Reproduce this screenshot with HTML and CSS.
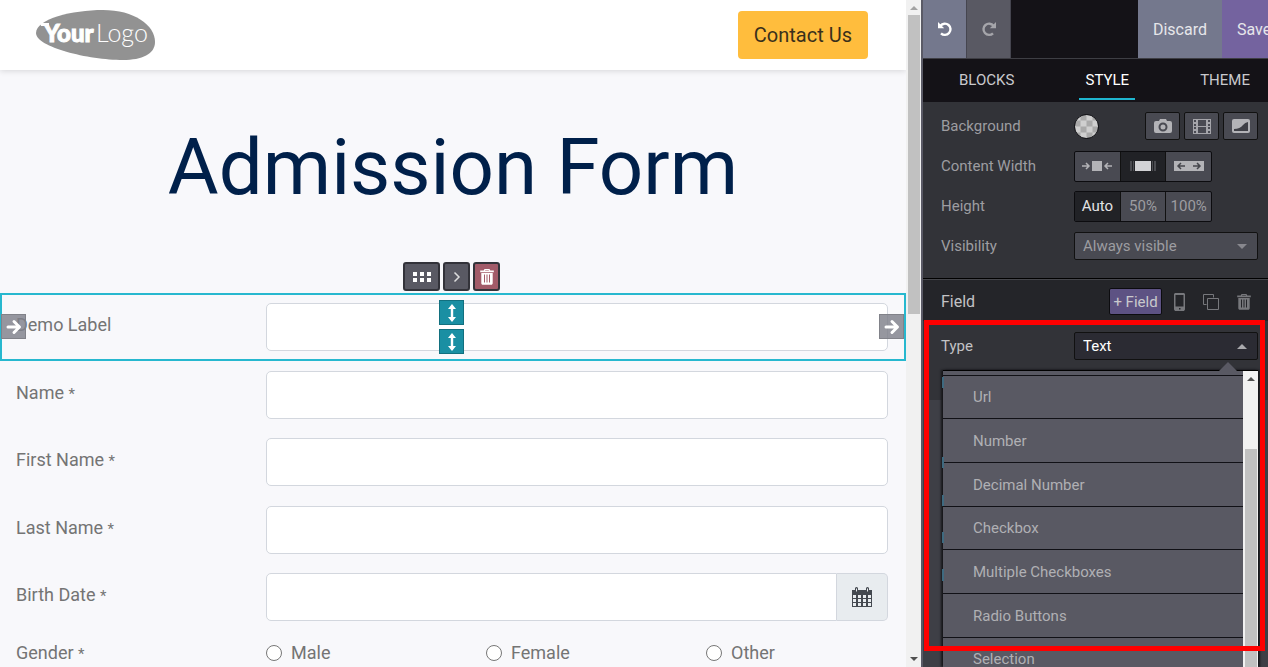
FILE: index.html
```html
<!DOCTYPE html>
<html lang="en">
<head>
<meta charset="utf-8">
<title>Admission Form</title>
<link rel="stylesheet" href="styles.css">
</head>
<body>
<svg class="defs" aria-hidden="true">
  <symbol id="trash" viewBox="0 0 14 16"><path fill="currentColor" fill-rule="evenodd" d="M3.700 1.500 4.500 .1h5l.8 1.400H13.800v1.700H.2V1.500zM5 1.500h4l-.3-.5H5.300zM1.300 4h11.400v10.300c0 .9-.6 1.500-1.500 1.500H2.800c-.9 0-1.500-.6-1.500-1.500zM4 5.500v8h1v-8zm2.500 0v8h1v-8zm2.500 0v8h1v-8z"/></symbol>
  <symbol id="updown" viewBox="0 0 10 20"><path fill="#fff" d="M5 1 9 6H6.200v8H9l-4 5-4-5h2.800V6H1z"/></symbol>
  <symbol id="right" viewBox="0 0 16 16"><path fill="none" stroke="#fff" stroke-width="3" stroke-linecap="round" stroke-linejoin="round" d="M2 8h11M8 2.500 13.500 8 8 13.500"/></symbol>
  <symbol id="undo" viewBox="0 0 16 16"><path fill="none" stroke="currentColor" stroke-width="2.400" d="M3.500 4.800A5.600 5.600 0 1 1 4 12.300"/><path fill="currentColor" d="M1 1v6.200h6.200z"/></symbol>
</svg>
<div class="app">
  <div class="site">
    <header class="top">
      <a href="#" class="logo" aria-label="Your Logo">
        <svg width="120" height="52" viewBox="0 0 120 52">
          <path fill="#929292" d="M0 24C0 10 36 1 67 1c31 0 52 15 52 32 0 12-13 18-32 18C52 51 0 38 0 24z"/>
          <path fill="#fff" d="M4 14h9v3H5z"/>
          <text class="logo-bold" x="8" y="33">Your</text>
          <text class="logo-light" x="60" y="33">Logo</text>
        </svg>
      </a>
      <button class="contact">Contact Us</button>
    </header>
    <main>
      <h1>Admission Form</h1>
      <form class="form">
        <div class="row selected">
          <label for="demo">Demo Label</label><input id="demo" type="text">
          <div class="tools">
            <button type="button" class="tool drag" aria-label="Move"><svg width="18" height="12"><path fill="#fff" d="M0 1h4v4H0zM7 1h4v4H7zM14 1h4v4h-4zM0 7h4v4H0zM7 7h4v4H7zM14 7h4v4h-4z"/></svg></button>
            <button type="button" class="tool" aria-label="Next"><svg width="8" height="12"><path fill="none" stroke="#ddd" stroke-width="1.500" d="m1.500 1.500 4.500 4.500-4.500 4.500"/></svg></button>
            <button type="button" class="tool remove" aria-label="Delete"><svg width="14" height="16"><use href="#trash"/></svg></button>
          </div>
          <div class="handles">
            <span class="handle"><svg width="10" height="20"><use href="#updown"/></svg></span>
            <span class="handle"><svg width="10" height="20"><use href="#updown"/></svg></span>
          </div>
          <span class="handle side start"><svg width="16" height="16"><use href="#right"/></svg></span>
          <span class="handle side end"><svg width="16" height="16"><use href="#right"/></svg></span>
        </div>
        <div class="row"><label for="name">Name <small>*</small></label><input id="name" type="text"></div>
        <div class="row"><label for="first">First Name <small>*</small></label><input id="first" type="text"></div>
        <div class="row"><label for="last">Last Name <small>*</small></label><input id="last" type="text"></div>
        <div class="row"><label for="birth">Birth Date <small>*</small></label>
          <div class="group"><input id="birth" type="text"><button type="button" class="cal" aria-label="Pick a date"><svg width="20" height="20"><path fill="#444950" fill-rule="evenodd" d="M0 3h3V1q1.500-2 3 0v2h8V1q1.500-2 3 0v2h3v17H0zM1 8v3h3V8zm5 0v3h3V8zm5 0v3h3V8zm5 0v3h3V8zM1 12v3h3v-3zm5 0v3h3v-3zm5 0v3h3v-3zm5 0v3h3v-3zM1 16v3h3v-3zm5 0v3h3v-3zm5 0v3h3v-3zm5 0v3h3v-3zM4 1.500v3h1v-3zm11 0v3h1v-3z"/></svg></button></div>
        </div>
        <div class="row gender"><span class="lab">Gender <small>*</small></span>
          <div class="radios">
            <label><input type="radio" name="gender">Male</label>
            <label><input type="radio" name="gender">Female</label>
            <label><input type="radio" name="gender">Other</label>
          </div>
        </div>
      </form>
    </main>
  </div>
  <div class="scroll"><i class="up dim"></i><div class="thumb page-thumb"></div><i class="down"></i></div>
  <aside class="panel">
    <div class="bar">
      <button class="undo" aria-label="Undo"><svg width="16" height="16"><use href="#undo"/></svg></button>
      <button class="redo" aria-label="Redo"><svg width="16" height="16"><use href="#undo"/></svg></button>
      <button class="discard">Discard</button>
      <button class="save">Save</button>
    </div>
    <nav class="tabs"><button>BLOCKS</button><button class="on">STYLE</button><button>THEME</button></nav>
    <section class="options">
      <div class="opt"><span>Background</span>
        <div class="bg"><button class="swatch" aria-label="Color"></button>
          <button class="box" aria-label="Image"><svg width="18" height="14"><path fill="#b3b3b7" fill-rule="evenodd" d="M6 0h6l1 2h3q2 0 2 2v8q0 2-2 2H2q-2 0-2-2V4q0-2 2-2h3zm3 3.500a4.500 4.500 0 1 0 0 9 4.500 4.500 0 0 0 0-9zM9 5.500a2.500 2.500 0 1 1 0 5 2.500 2.500 0 0 1 0-5z"/></svg></button>
          <button class="box" aria-label="Video"><svg width="18" height="15"><path fill="#a5a5aa" fill-rule="evenodd" d="M0 0h18v15H0zM1 1v2h2V1zm0 4v2h2V5zm0 3v2h2V8zm0 4v2h2v-2zM5 1v6h8V1zm0 7v6h8V8zM15 1v2h2V1zm0 4v2h2V5zm0 3v2h2V8zm0 4v2h2v-2z"/></svg></button>
          <button class="box" aria-label="Shape"><svg width="18" height="14"><rect width="18" height="14" rx="2" fill="#b3b3b7"/><path fill="#3e3f46" d="M2 12V10Q8 10 11 6q2-2.500 5-3v9z"/></svg></button>
        </div>
      </div>
      <div class="opt"><span>Content Width</span>
        <div class="seg">
          <button aria-label="Small"><svg width="30" height="12"><path fill="#b3b3b7" d="M10 1h10v10H10z"/><path fill="none" stroke="#b3b3b7" stroke-width="1.500" d="M0 6h7M4 3l3 3-3 3M30 6h-7M26 3l-3 3 3 3"/></svg></button>
          <button class="on" aria-label="Regular"><svg width="26" height="12"><path fill="#d2d2d5" d="M5 1h16v10H5z"/><path fill="#4a4b50" d="M0 1h2v10H0zM3 1h1v10H3zM22 1h1v10h-1zM24 1h2v10h-2z"/></svg></button>
          <button aria-label="Full"><svg width="30" height="12"><path fill="#b3b3b7" d="M0 1h30v10H0z"/><path fill="none" stroke="#45464c" stroke-width="1.500" d="M4 6h7M7 3 4 6l3 3M26 6h-7M23 3l3 3-3 3"/></svg></button>
        </div>
      </div>
      <div class="opt"><span>Height</span><div class="seg"><button class="on">Auto</button><button>50%</button><button>100%</button></div></div>
      <div class="opt"><label for="vis">Visibility</label><div class="select"><select id="vis"><option>Always visible</option></select><i class="down"></i></div></div>
    </section>
    <div class="head"><h2>Field</h2>
      <button class="add">+ Field</button>
      <button class="icon" aria-label="Mobile"><svg width="11" height="18"><path fill="currentColor" fill-rule="evenodd" d="M1 0h9l1 1v15.500L10 18H1l-1-1.500V1zm.5 2v11.500h8V2zM5 15v1.500h1.500V15z"/></svg></button>
      <button class="icon" aria-label="Duplicate"><svg width="16" height="16"><path fill="none" stroke="currentColor" d="M3.500 10.500h-3v-10h10v3M4.500 4.500h11v11h-11z"/></svg></button>
      <button class="icon" aria-label="Remove"><svg width="14" height="16"><use href="#trash"/></svg></button>
    </div>
    <section class="fields">
      <div class="opt bright"><label for="type">Type</label><div class="select open"><select id="type"><option>Text</option></select><i class="up"></i></div></div>
      <div class="menu" role="listbox">
        <div class="items">
          <button role="option">Url</button><button role="option">Number</button><button role="option">Decimal Number</button><button role="option">Checkbox</button><button role="option">Multiple Checkboxes</button><button role="option">Radio Buttons</button><button role="option">Selection</button>
        </div>
        <div class="scroll"><i class="up"></i><div class="thumb menu-thumb"></div></div>
      </div>
    </section>
    <div class="frame"></div>
  </aside>
</div>
</body>
</html>
```

FILE: styles.css
```css
* { box-sizing: border-box; }
body { margin: 0; font-family: Roboto, "Liberation Sans", sans-serif; overflow: hidden; }
button, input, select { font: inherit; color: inherit; margin: 0; padding: 0; border: 0; background: none; }
button { display: flex; align-items: center; justify-content: center; flex: none; }
svg { display: block; flex: none; }
.defs { position: absolute; width: 0; height: 0; }
.app { display: flex; height: 100vh; overflow: hidden; }

/* website preview */
.site { flex: 1; min-width: 0; background: #f8f8fb; color: #747474; font-size: 18px; overflow: hidden; }
.top { display: flex; align-items: center; justify-content: space-between; height: 70px; padding: 0 38px 0 36px; background: #fff; box-shadow: 0 1px 6px rgba(0, 0, 0, .14); }
.logo-bold, .logo-light { fill: #fff; font-family: Lato, sans-serif; font-size: 25px; }
.logo-bold { font-size: 24px; font-weight: 900; stroke: #fff; stroke-width: 1px; }
.logo-light { font-weight: 300; }
.contact { height: 48px; padding: 0 16px; border-radius: 4px; background: #ffbd3d; color: #3a301b; font-size: 20px; }
h1 { margin: 51px 0 78px; color: #00204a; font-size: 78px; line-height: 94px; font-weight: 400; text-align: center; }
.row { position: relative; display: grid; grid-template-columns: 250px 1fr; height: 68px; padding: 10px 18px 10px 16px; }
.row:nth-child(even) { height: 67px; }
.row > label, .lab { padding-top: 10px; line-height: 24px; }
.row small { font-size: 15px; }
.row input[type="text"] { width: 100%; min-width: 0; height: 48px; border: 1px solid #d3d7de; border-radius: 5px; background: #fff; }
.selected { box-shadow: inset 0 0 0 2px #27b8cf; }
.group { display: flex; }
.row .group input[type="text"] { border-radius: 5px 0 0 5px; }
.cal { width: 51px; height: 48px; border: 1px solid #d3d7de; border-left: 0; border-radius: 0 5px 5px 0; background: #e8ecef; }
.gender { padding-top: 0; }
.radios { display: grid; grid-template-columns: 220px 220px 1fr; padding-top: 10px; line-height: 24px; }
.radios label { display: flex; align-items: center; height: 24px; gap: 9px; }
.radios input { appearance: none; width: 16px; height: 16px; border: 1px solid #777; border-radius: 50%; background: #fff; }
.tools { position: absolute; left: calc(50% - 50px); top: -31px; display: flex; gap: 3px; }
.tool { width: 27px; height: 29px; border: 2px solid #33333a; border-radius: 3px; background: #595963; }
.drag { width: 37px; }
.remove { background: #a25b69; color: #fff; }
.handles { position: absolute; left: calc(50% - 14px); top: 7px; display: grid; gap: 4px; }
.handle { display: grid; place-items: center; width: 25px; height: 25px; border: 1px solid #12707f; background: #1a8fa3; }
.side { position: absolute; top: 21px; border-color: #818289; background: rgba(127, 128, 138, .82); }
.start { left: 1px; }
.end { right: 2px; }

/* scrollbars */
.scroll { flex: none; display: flex; flex-direction: column; align-items: center; width: 15px; padding: 6px 0; background: #f1f1f1; color: #505050; }
.thumb { width: 12px; background: #c1c1c1; }
.page-thumb { height: 299px; margin: 5px 0 auto; }
.menu-thumb { flex: 1; margin-top: 68px; }
i.up, i.down { width: 0; height: 0; border: 4px solid transparent; }
i.up { border-top: 0; border-bottom-color: currentColor; }
i.down { border-bottom: 0; border-top-color: currentColor; }
i.dim { color: #a3a3a3; }

/* editor panel */
.panel { position: relative; flex: none; display: flex; flex-direction: column; width: 347px; border-left: 2px solid #5a5a66; overflow: hidden; background: #3e3f46; color: #9d9da1; font-size: 15px; }
.bar { display: flex; height: 59px; flex: none; border-bottom: 1px solid #3e3e44; background: #141217; color: #e6e6ea; font-size: 16px; }
.undo, .redo { width: 44px; background: #74788d; color: #fff; border-right: 1px solid #45454f; }
.redo { background: #595963; color: #a5a5aa; }
.redo svg { transform: scaleX(-1); }
.discard, .save { padding: 0 15px; background: #74788d; }
.discard { margin-left: auto; }
.save { width: 46px; justify-content: flex-start; padding-right: 0; background: #74639f; overflow: hidden; }
.tabs { display: flex; justify-content: space-between; height: 43px; flex: none; padding: 0 12px 0 30px; background: #141217; color: #c9c9cd; }
.tabs button { height: 41px; padding: 2px 6px 0; border-bottom: 2px solid transparent; }
.tabs .on { border-color: #1fb5cf; color: #fff; }
.options { flex: none; height: 176px; padding-top: 4px; background: #323338; }
.opt { display: grid; grid-template-columns: 133px 1fr; align-items: center; height: 40px; padding: 0 10px 0 18px; }
.bg { display: flex; align-items: center; gap: 4px; }
.swatch { width: 25px; height: 25px; margin-right: auto; border: 1px solid #101014; border-radius: 50%; background: repeating-conic-gradient(#a9a9a9 0 25%, #cfcfcf 0 50%) center / 12px 12px; }
.box { width: 35px; height: 28px; border: 1px solid #111; border-radius: 2px; background: #494a52; }
.seg { display: flex; width: 138px; height: 31px; border: 1px solid #0c0c0f; border-radius: 2px; background: #494a52; }
.seg button { flex: 1; }
.seg button + button { border-left: 1px solid #111; }
.seg .on { background: #212226; color: #e2e2e4; }
.select { display: flex; align-items: center; height: 28px; padding-right: 10px; border: 1px solid #111; border-radius: 2px; background: #494a52; }
.select select { flex: 1; padding-left: 8px; appearance: none; outline: 0; }
.select i { border-width: 5px; color: #88888e; }
.select i.up { border-top: 0; }
.select i.down { border-bottom: 0; }
.open { background: #2b2b33; color: #fff; }
.open i { color: #a9a9ad; }
.head { display: flex; align-items: center; flex: none; height: 43px; padding: 3px 17px 0 18px; border-top: 1px solid #000; background: linear-gradient(#45464b 1px, #242529 1px); }
h2 { margin: 0 auto 0 0; color: #c2c2c5; font-size: 16px; font-weight: 400; }
.add { width: 53px; height: 27px; border: 1px solid #0c0c0f; border-radius: 2px; background: #5d5283; color: #c9c9cd; }
.icon { color: #77787c; margin-left: 12px; }
.icon + .icon { margin-left: 18px; }
.fields { position: relative; flex: 1; padding-top: 5px; background: linear-gradient(#323338 79px, #3e3f46 79px); }
.bright { color: #c2c2c5; }
.menu { position: absolute; left: 20px; right: 10px; top: 49px; bottom: 0; display: flex; border-top: 1px solid #000; box-shadow: -2px 0 2px #16161a, 2px 0 2px #16161a; background: #595963; }
.menu::before { content: ""; position: absolute; right: 21px; top: -9px; border: 9px solid transparent; border-top: 0; border-bottom-color: #595963; }
.menu::after { content: ""; position: absolute; left: -1px; top: 6px; width: 2px; height: 204px; background: linear-gradient(#3f6a80 11px, transparent 11px 80px, #3f6a80 80px 91px, transparent 91px 118px, #3f6a80 118px 129px, transparent 129px 155px, #3f6a80 155px 166px, transparent 166px 192px, #3f6a80 192px); }
.items { flex: 1; padding-top: 4px; overflow: hidden; color: #b0b0b4; }
.items button { width: 100%; height: 44px; justify-content: flex-start; padding-left: 30px; border-top: 1px solid #111116; }
.items button:nth-child(3n + 1) { height: 43px; }
.menu .scroll { padding-bottom: 0; }
.frame { position: absolute; left: 1px; right: 3px; top: 320px; height: 331px; border: 5px solid #f00; pointer-events: none; }
```
